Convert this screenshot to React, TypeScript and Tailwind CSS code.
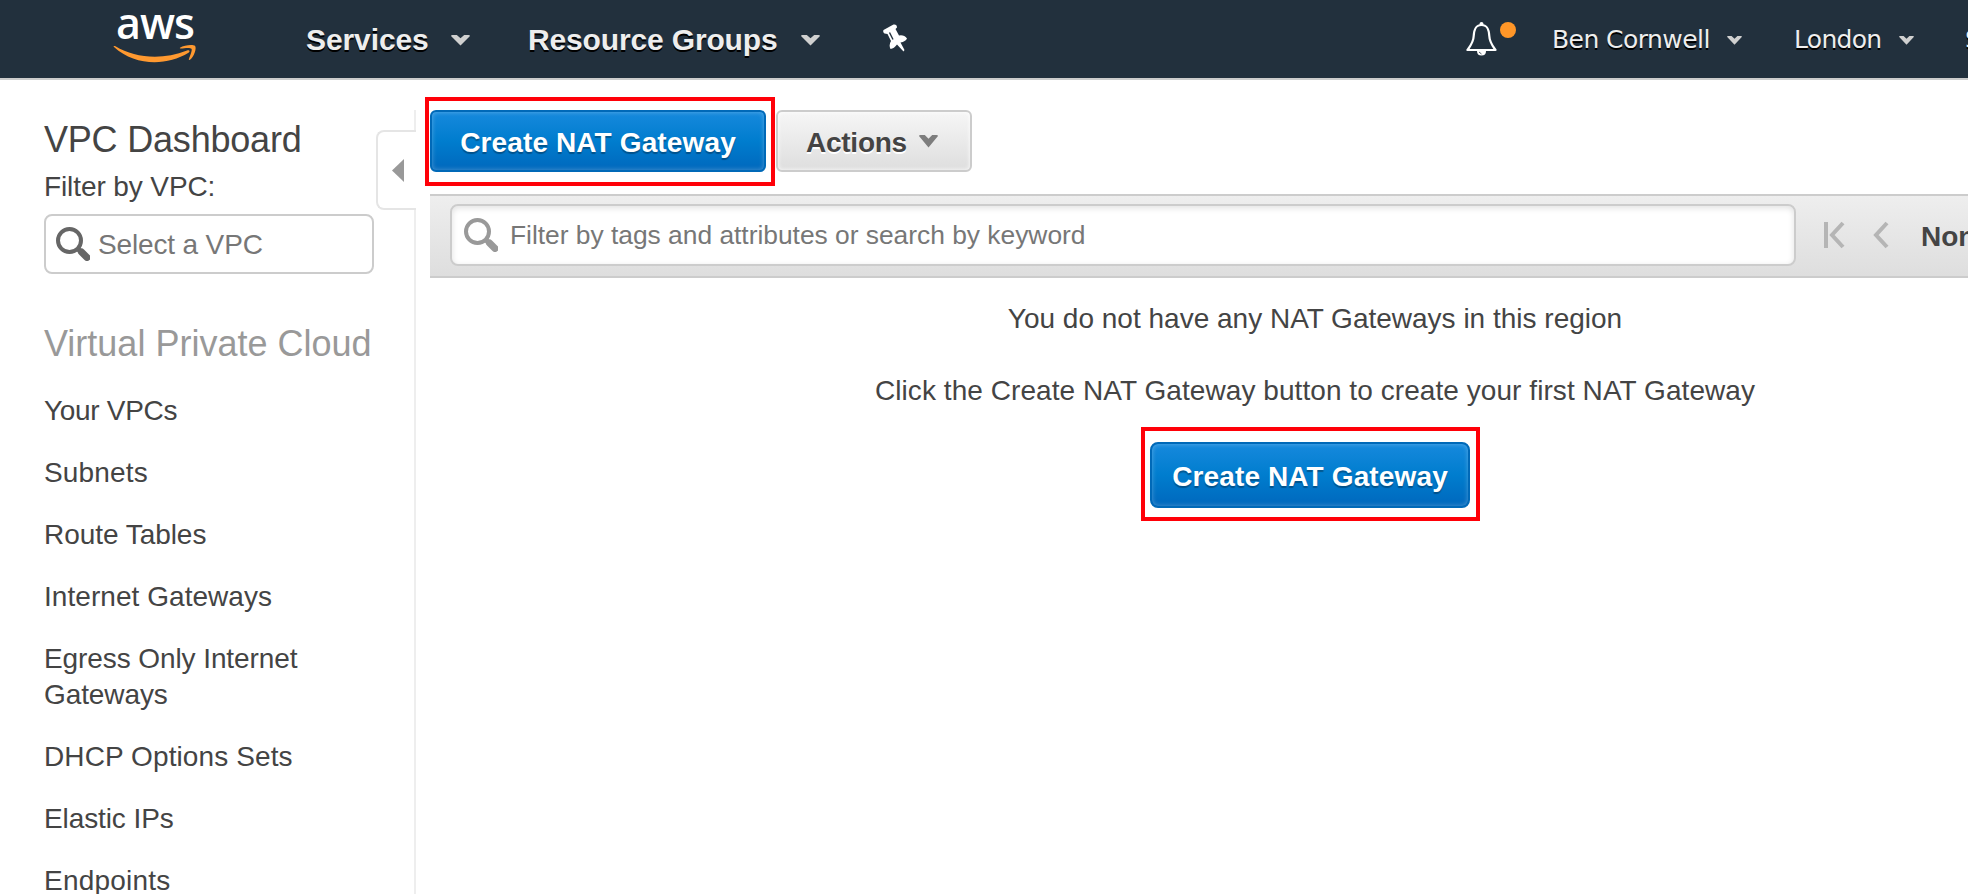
import React from "react";

const links = [
  { label: "Your VPCs", tracking: "tracking-[-0.3px]" },
  { label: "Subnets", tracking: "tracking-[0.15px]" },
  { label: "Route Tables", tracking: "tracking-[-0.05px]" },
  { label: "Internet Gateways", tracking: "tracking-[0.05px]" },
  { label: "Egress Only Internet Gateways", tracking: "tracking-[-0.09px]" },
  { label: "DHCP Options Sets", tracking: "tracking-[0.1px]" },
  { label: "Elastic IPs", tracking: "tracking-[-0.1px]" },
  { label: "Endpoints", tracking: "tracking-[0.2px]" },
];

function Caret({ className, light }: { className: string; light?: boolean }) {
  return (
    <svg viewBox="0 0 18 12" preserveAspectRatio="none" className={className}>
      <path d="M0 1 Q0 0 1.500 0 H5.500 L9 3.500 L12.500 0 H16.500 Q18 0 18 1 L9 11.500 Z" fill={light ? "#d0d0d0" : "#7d7d7d"} />
    </svg>
  );
}

function Magnifier({ color }: { color: string }) {
  return (
    <svg viewBox="0 0 34 34" className="h-[34px] w-[34px] shrink-0" fill="none" stroke={color}>
      <circle cx="13.500" cy="13.500" r="11.500" strokeWidth="4" />
      <path d="M22.500 22.500 L25 25" strokeWidth="5" />
      <path d="M25.500 25 L31 30.500" strokeWidth="7" strokeLinecap="round" />
    </svg>
  );
}

function AwsLogo() {
  return (
    <div className="ml-[113px] flex h-[62px] w-[84px] shrink-0 flex-col items-center">
      <span className="mt-[-2px] h-[43px] font-['Open_Sans','Noto_Sans',sans-serif] text-[43px] font-semibold leading-[43px] tracking-[-0.9px] text-white">aws</span>
      <svg viewBox="0 0 84 19" className="h-[19px] w-[84px]" fill="#ff9930">
        <path d="M1 3 C0 2 1 1.500 2.500 2.300 C22 14 49 16.500 74 6.500 C76.500 5.500 77.500 7.500 75.500 8.800 C53 22.500 22 22 1 3 Z" />
        <path d="M67 3.800 C71 .8 80 .2 82 1.700 C84 4 81 13 77 15.700 C76 16.200 75.500 15.700 76 14.700 C77 12 79.500 6 78.500 4.700 C77 3.200 71 4.200 68 4.500 C67 4.500 66.500 4.200 67 3.800 Z" />
      </svg>
    </div>
  );
}

function PrimaryButton({ className }: { className: string }) {
  return (
    <button
      className={
        "flex items-center justify-center whitespace-nowrap border-2 border-[#0069b8] bg-gradient-to-b from-[#1589dd] via-[#007dce] to-[#0068bd] pt-[3px] text-[28px] font-bold tracking-[0.13px] text-white shadow-[inset_0_0_5px_rgba(255,255,255,0.3)] [text-shadow:0_2px_1px_rgba(0,0,0,0.3)] " +
        className
      }
    >
      Create NAT Gateway
    </button>
  );
}

export default function App() {
  return (
    <div className="flex h-[894px] w-[1968px] flex-col overflow-hidden bg-white font-['Liberation_Sans',sans-serif] text-[#444]">
      <header className="flex h-[80px] shrink-0 items-start overflow-hidden border-b-2 border-[#ccc] bg-[#22303d] pt-[3px] text-[#eee]">
        <AwsLogo />
        <div className="ml-[109px] mt-[19px] flex shrink-0 items-center text-[30px] font-bold leading-[36px] [text-shadow:0_2px_0_#000]">
          <span className="w-[123px] whitespace-nowrap tracking-[-0.1px]">Services</span>
          <Caret light className="ml-[22px] h-[11px] w-[19px]" />
          <span className="ml-[58px] w-[250px] whitespace-nowrap tracking-[-0.15px]">Resource Groups</span>
          <Caret light className="ml-[23px] h-[11px] w-[19px]" />
        </div>
        <svg viewBox="0 0 24 28" preserveAspectRatio="none" className="ml-[63px] mt-[21px] h-[28px] w-[24px] shrink-0" fill="#fff">
          <path d="M0.500 6 L10.500 0.500 Q14 0 14 3.500 L12.500 5 L16 11.500 Q21 10.500 24 14.500 Q22.500 17.500 17.500 18.500 L21.500 26 L20.500 27.500 L14 20.500 Q11 24.500 7.500 25 Q5.500 21 8 17 L4.500 10 L1.500 9.500 Q-0.500 8 0.500 6 Z" />
          <path d="M6.500 8.500 L10 15.500" stroke="#22303d" strokeWidth="1.400" />
        </svg>
        <div className="ml-[559px] mt-[18px] flex h-[36px] shrink-0 items-start">
          <svg viewBox="0 0 31 36" className="h-[36px] w-[31px]" fill="none" stroke="#fff" strokeWidth="2.200">
            <path d="M15.500 4 C9 4 8 9.500 7.700 15 C7.500 21 5 24 1.500 29 H29.500 C26 24 23.500 21 23.300 15 C23 9.500 22 4 15.500 4 Z" strokeLinejoin="round" />
            <circle cx="15.500" cy="3" r="2" fill="#fff" stroke="none" />
            <path d="M11 30 H20 Q20 34.500 15.500 34.500 Q11 34.500 11 30 Z" fill="#fff" stroke="none" />
            <path d="M13 31 L15.500 33" stroke="#22303d" strokeWidth="0.800" />
          </svg>
          <span className="ml-[3px] mt-px h-[16px] w-[16px] rounded-full bg-[#ff9628]" />
        </div>
        <div className="ml-[36px] mt-[19px] flex shrink-0 items-center font-['DejaVu_Sans',sans-serif] text-[25px] leading-[36px] [text-shadow:0_2px_0_#000]">
          <span className="w-[158px] whitespace-nowrap tracking-[-0.55px]">Ben Cornwell</span>
          <Caret light className="ml-[17px] h-[9px] w-[15px]" />
          <span className="ml-[52px] w-[88px] whitespace-nowrap tracking-[-0.7px]">London</span>
          <Caret light className="ml-[17px] h-[9px] w-[15px]" />
          <span className="ml-[51px]">Support</span>
        </div>
      </header>

      <div className="flex min-h-0 flex-1">
        <aside className="flex w-[416px] shrink-0 pt-[30px]">
          <nav className="w-[332px] shrink-0 pl-[44px] text-[28px] leading-[36px]">
            <h1 className="mt-[8px] whitespace-nowrap text-[36px] leading-[44px] tracking-[-0.2px]">VPC Dashboard</h1>
            <div className="mt-[7px] whitespace-nowrap tracking-[-0.1px]">Filter by VPC:</div>
            <div className="mt-[9px] flex h-[60px] w-[330px] items-center rounded-lg border-2 border-[#ccc] pl-[10px] text-[#777]">
              <Magnifier color="#666" />
              <span className="ml-[8px] pt-px tracking-[-0.15px]">Select a VPC</span>
            </div>
            <h2 className="mt-[48px] whitespace-nowrap text-[36px] leading-[44px] text-[#999]">Virtual Private Cloud</h2>
            <ul className="mt-[27px] flex flex-col gap-[26px]">
              {links.map(({ label, tracking }) => (
                <li key={label} className={"w-[300px] " + tracking}>{label}</li>
              ))}
            </ul>
          </nav>
          <div className="ml-[44px] flex w-[40px] shrink-0 flex-col items-end">
            <div className="h-[20px] w-[2px] bg-[#eee]" />
            <div className="flex h-[80px] w-[40px] shrink-0 items-center rounded-l-lg border-2 border-r-0 border-[#e5e5e5] pl-[14px]">
              <svg viewBox="0 0 12 22" preserveAspectRatio="none" className="h-[23px] w-[12px]" fill="#999"><path d="M12 0 V22 L0 11 Z" /></svg>
            </div>
            <div className="w-[2px] flex-1 bg-[#eee]" />
          </div>
        </aside>

        <main className="ml-[9px] flex min-w-0 flex-1 flex-col">
          <div className="flex items-start pt-[17px]">
            <div className="h-[89px] w-[350px] border-4 border-[#ff0008] py-[9px] pl-px">
              <PrimaryButton className="h-[62px] w-[336px] rounded-md" />
            </div>
            <button className="ml-px mt-[13px] flex h-[62px] w-[196px] items-center rounded-md border-2 border-[#ccc] bg-gradient-to-b from-[#f6f6f6] to-[#dedede] pl-[28px] text-[28px] font-bold shadow-[inset_0_0_4px_#fff] [text-shadow:0_2px_0_#fff]">
              <span className="pt-[3px] tracking-[-0.25px]">Actions</span>
              <Caret className="ml-[12px] h-[13px] w-[19px]" />
            </button>
          </div>
          <div className="ml-[5px] mt-[8px] flex h-[84px] shrink-0 items-start overflow-hidden border-y-2 border-[#ccc] bg-gradient-to-b from-[#eee] to-[#dedede] pl-[20px] pt-[8px]">
            <div className="flex h-[62px] w-[1346px] shrink-0 items-center rounded-lg border-2 border-[#ccc] bg-white pl-[12px] text-[#777] shadow-[inset_0_2px_6px_rgba(0,0,0,0.12)]">
              <Magnifier color="#999" />
              <span className="ml-[12px] whitespace-nowrap pt-[2px] text-[26.4px] tracking-[-0.02px]">Filter by tags and attributes or search by keyword</span>
            </div>
            <svg viewBox="0 0 66 28" className="ml-[27px] mt-[17px] h-[28px] w-[66px] shrink-0" fill="none" stroke="#b5b5b5" strokeWidth="4">
              <path d="M3 1 V27 M20 2 L9 14 L20 26 M64 2 L53 14 L64 26" />
            </svg>
            <span className="ml-[32px] mt-[16px] whitespace-nowrap text-[28px] font-bold leading-[34px]">None found</span>
          </div>
          <div className="flex w-[1780px] flex-col items-center text-[28px] leading-[36px]">
            <p className="mt-[23px] whitespace-nowrap">You do not have any NAT Gateways in this region</p>
            <p className="mt-[36px] whitespace-nowrap tracking-[0.065px]">Click the Create NAT Gateway button to create your first NAT Gateway</p>
            <div className="mr-[9px] mt-[18px] h-[94px] w-[339px] border-4 border-[#ff0008] pl-[5px] pt-[11px]">
              <PrimaryButton className="h-[66px] w-[320px] rounded-lg" />
            </div>
          </div>
        </main>
      </div>
    </div>
  );
}
